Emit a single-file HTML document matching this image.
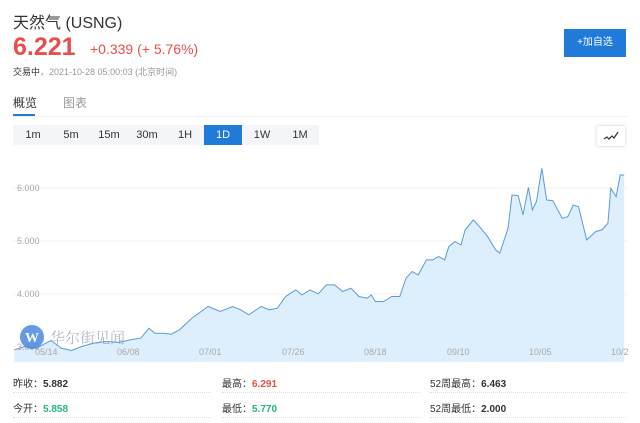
<!DOCTYPE html>
<html><head><meta charset="utf-8"><style>
*{margin:0;padding:0;box-sizing:border-box}
body{width:640px;height:423px;background:#fff;font-family:"Liberation Sans","Noto Sans CJK SC",sans-serif;position:relative;overflow:hidden;color:#333}
.a{position:absolute;white-space:nowrap}
.tb{position:absolute;top:125px;height:20px;font-size:11px;color:#333;text-align:center;line-height:20px}
.lbl{font-size:9px;fill:#aaa;font-family:"Liberation Sans",sans-serif}
.st{position:absolute;font-size:10px;color:#333}
.st b{font-weight:bold}
.hr{position:absolute;height:0;border-top:1px dotted #ddd}
</style></head><body>
<div class="a" style="left:13px;top:9px;font-size:16px;color:#333">天然气 (USNG)</div>
<div class="a" style="left:13px;top:33px;font-size:25px;font-weight:bold;color:#e84e4e">6.221</div>
<div class="a" style="left:90px;top:41px;font-size:14px;color:#e84e4e">+0.339 (+ 5.76%)</div>
<div class="a" style="left:13px;top:65px;font-size:9px;color:#333">交易中<span style="color:#999">，2021-10-28 05:00:03 (北京时间)</span></div>
<div class="a" style="left:564px;top:29px;width:62px;height:28px;background:#1f7ad9;color:#fff;font-size:10px;text-align:center;line-height:28px">+加自选</div>
<div class="a" style="left:13px;top:94px;font-size:12px;color:#333">概览</div>
<div class="a" style="left:63px;top:94px;font-size:12px;color:#999">图表</div>
<div class="a" style="left:13px;top:114px;width:22px;height:2px;background:#1f7ad9"></div>
<div class="a" style="left:13px;top:116px;width:614px;height:1px;background:#eee"></div>
<div class="a" style="left:13px;top:125px;width:306px;height:20px;background:#f3f5f8"></div>
<div class="tb" style="left:20px;width:26px">1m</div>
<div class="tb" style="left:58px;width:26px">5m</div>
<div class="tb" style="left:96px;width:26px">15m</div>
<div class="tb" style="left:134px;width:26px">30m</div>
<div class="tb" style="left:172px;width:26px">1H</div>
<div class="tb" style="left:204px;width:38px;background:#1f7ad9;color:#fff">1D</div>
<div class="tb" style="left:249px;width:26px">1W</div>
<div class="tb" style="left:287px;width:26px">1M</div>
<div class="a" style="left:597px;top:126px;width:28px;height:20px;background:#fff;box-shadow:0 0 3px #ccc"></div>
<svg class="a" style="left:603px;top:130px" width="16" height="12"><path d="M1 9 L4 7 L6 9 L9 6 L11 8 L15 2" fill="none" stroke="#333" stroke-width="1.2"/></svg>
<svg class="a" style="left:0;top:150px" width="640" height="220" viewBox="0 150 640 220">
<rect x="13" y="155" width="614" height="207" fill="#fff"/>
<line x1="13" x2="627" y1="188" y2="188" stroke="#f5f0e8"/>
<line x1="13" x2="627" y1="241" y2="241" stroke="#f5f0e8"/>
<line x1="13" x2="627" y1="294" y2="294" stroke="#f5f0e8"/>
<path d="M14.3 349.8 L24.5 346.5 L36.7 348.1 L51 340.5 L61.2 348.1 L71.4 350.5 L81.6 346.5 L93.8 343.1 L106.1 341.5 L118.3 342.5 L130.6 339.8 L140.8 338.1 L148.9 328.2 L155 333.2 L163.2 333.2 L171.4 334.1 L179.5 329.8 L191.8 318.2 L208.1 306.5 L220.3 311.5 L232.6 306.5 L240.7 309.8 L248.9 314.8 L261.1 306.5 L269.3 309.8 L277.4 308.2 L285.6 296.5 L295.8 289.9 L301.9 294.9 L310.1 289.9 L318.2 293.9 L326.4 284.9 L334.6 284.9 L342.7 291.5 L350.9 288.2 L359 296.5 L367.2 298.2 L371.3 294.9 L375.4 301.5 L383.5 301.5 L391.7 296.5 L399.8 296.5 L406 278.2 L412.1 271.5 L418.2 274.9 L426.4 259.9 L432.5 259.9 L438.6 256.6 L444.7 259.9 L448.8 246.6 L454.9 241.6 L461 244.9 L465.1 229.9 L473.3 219.9 L479.4 226.6 L487.6 236.6 L495.7 249.9 L499.8 253.2 L508 228.3 L512 195 L518.2 195.6 L523 214.9 L528.4 187.3 L532.4 209.9 L536.5 201.6 L541.8 168.3 L546.7 200 L552.8 200.6 L562.2 218.3 L567.9 216.6 L573.2 205 L578.5 206.6 L586.7 239.9 L595.7 231.6 L601.8 229.9 L607.9 223.3 L610.8 188.3 L616.1 196.6 L620.2 175 L624.2 175 L624.2 362 L14.3 362 Z" fill="#ddeefc" stroke="none"/>
<path d="M14.3 349.8 L24.5 346.5 L36.7 348.1 L51 340.5 L61.2 348.1 L71.4 350.5 L81.6 346.5 L93.8 343.1 L106.1 341.5 L118.3 342.5 L130.6 339.8 L140.8 338.1 L148.9 328.2 L155 333.2 L163.2 333.2 L171.4 334.1 L179.5 329.8 L191.8 318.2 L208.1 306.5 L220.3 311.5 L232.6 306.5 L240.7 309.8 L248.9 314.8 L261.1 306.5 L269.3 309.8 L277.4 308.2 L285.6 296.5 L295.8 289.9 L301.9 294.9 L310.1 289.9 L318.2 293.9 L326.4 284.9 L334.6 284.9 L342.7 291.5 L350.9 288.2 L359 296.5 L367.2 298.2 L371.3 294.9 L375.4 301.5 L383.5 301.5 L391.7 296.5 L399.8 296.5 L406 278.2 L412.1 271.5 L418.2 274.9 L426.4 259.9 L432.5 259.9 L438.6 256.6 L444.7 259.9 L448.8 246.6 L454.9 241.6 L461 244.9 L465.1 229.9 L473.3 219.9 L479.4 226.6 L487.6 236.6 L495.7 249.9 L499.8 253.2 L508 228.3 L512 195 L518.2 195.6 L523 214.9 L528.4 187.3 L532.4 209.9 L536.5 201.6 L541.8 168.3 L546.7 200 L552.8 200.6 L562.2 218.3 L567.9 216.6 L573.2 205 L578.5 206.6 L586.7 239.9 L595.7 231.6 L601.8 229.9 L607.9 223.3 L610.8 188.3 L616.1 196.6 L620.2 175 L624.2 175" fill="none" stroke="#5b9bd9" stroke-width="1"/>
<text x="17" y="191" class="lbl">6.000</text>
<text x="17" y="244" class="lbl">5.000</text>
<text x="17" y="297" class="lbl">4.000</text>
<text x="17" y="350" class="lbl">3.000</text>
<text x="35" y="355" class="lbl">05/14</text>
<text x="117" y="355" class="lbl">06/08</text>
<text x="199" y="355" class="lbl">07/01</text>
<text x="282" y="355" class="lbl">07/26</text>
<text x="364" y="355" class="lbl">08/18</text>
<text x="447" y="355" class="lbl">09/10</text>
<text x="529" y="355" class="lbl">10/05</text>
<text x="611" y="355" class="lbl">10/2</text>
<circle cx="32" cy="337" r="12" fill="#4a8ae0" opacity="0.85"/>
<text x="25" y="342" font-size="14" font-weight="bold" fill="#fff" font-family="Liberation Serif,serif">W</text>
<text x="50" y="343" font-size="15" fill="#8a9bb0" opacity="0.7" font-family="Noto Serif CJK SC,serif">华尔街见闻</text>
</svg>
<div class="st" style="left:13px;top:375px">昨收：<b>5.882</b></div>
<div class="st" style="left:222px;top:375px">最高：<b style="color:#e84e4e">6.291</b></div>
<div class="st" style="left:430px;top:375px">52周最高：<b>6.463</b></div>
<div class="st" style="left:13px;top:400px">今开：<b style="color:#2bb07f">5.858</b></div>
<div class="st" style="left:222px;top:400px">最低：<b style="color:#2bb07f">5.770</b></div>
<div class="st" style="left:430px;top:400px">52周最低：<b>2.000</b></div>
<div class="hr" style="left:13px;top:392px;width:198px"></div>
<div class="hr" style="left:222px;top:392px;width:198px"></div>
<div class="hr" style="left:430px;top:392px;width:196px"></div>
<div class="hr" style="left:13px;top:417px;width:198px"></div>
<div class="hr" style="left:222px;top:417px;width:198px"></div>
<div class="hr" style="left:430px;top:417px;width:196px"></div>
</body></html>
